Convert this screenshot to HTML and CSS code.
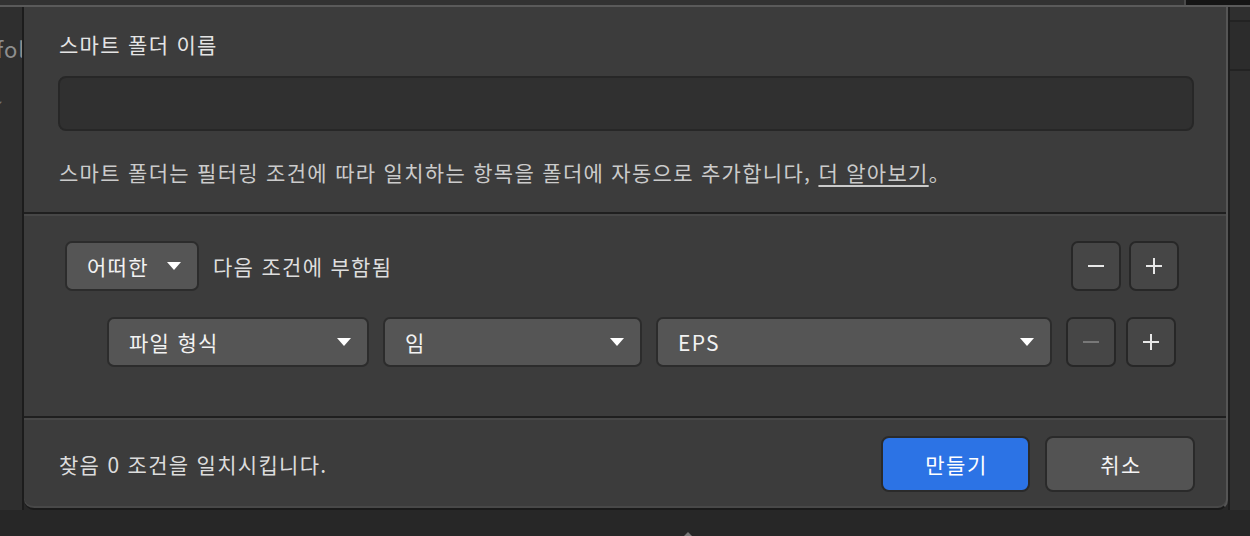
FILE: index.html
```html
<!DOCTYPE html>
<html lang="ko">
<head>
    <meta charset="UTF-8">
    <meta name="viewport" content="width=device-width, initial-scale=1.0">
    <title>스마트 폴더</title>
    <link rel="stylesheet" href="styles.css">
</head>
<body>
    <div class="topbar">
        <div class="topbar-main"></div>
        <div class="topbar-side"></div>
    </div>

    <div class="stage">
        <div class="behind behind-left">
            <span class="behind-label">fol</span>
            <span class="behind-mark">✓</span>
        </div>

        <div class="dialog">
            <section class="name-section">
                <label class="field-label" for="folderName">스마트 폴더 이름</label>
                <input type="text" id="folderName" class="name-input">
                <p class="hint">스마트 폴더는 필터링 조건에 따라 일치하는 항목을 폴더에 자동으로 추가합니다, <a href="#" class="hint-link">더 알아보기</a>。</p>
            </section>

            <div class="divider"></div>

            <section class="rules">
                <div class="rule-row rule-row-top">
                    <button class="select select-any">어떠한 <span class="caret"></span></button>
                    <span class="rule-text">다음 조건에 부함됨</span>
                    <div class="spacer"></div>
                    <button class="step-btn"><span class="minus"></span></button>
                    <button class="step-btn"><span class="plus"></span></button>
                </div>
                <div class="rule-row rule-row-sub">
                    <button class="select select-field">파일 형식 <span class="caret"></span></button>
                    <button class="select select-op">임 <span class="caret"></span></button>
                    <button class="select select-value">EPS <span class="caret"></span></button>
                    <button class="step-btn" disabled><span class="minus"></span></button>
                    <button class="step-btn"><span class="plus"></span></button>
                </div>
            </section>

            <div class="divider"></div>

            <footer class="dialog-footer">
                <span class="match-text">찾음 0 조건을 일치시킵니다.</span>
                <div class="spacer"></div>
                <button class="btn btn-primary">만들기</button>
                <button class="btn">취소</button>
            </footer>
        </div>

        <div class="behind behind-right">
            <div class="side-row"></div>
        </div>
    </div>

    <div class="below">
        <span class="below-tip"></span>
    </div>
</body>
</html>
```

FILE: styles.css
```css
body {
    margin: 0;
    padding: 0;
    height: 536px;
    overflow: hidden;
    background-color: #272727;
    font-family: 'Noto Sans CJK KR', 'Noto Sans', sans-serif;
    font-size: 21px;
    letter-spacing: 1.3px;
    color: #e2e2e2;
}

/* 뒤쪽 창 */
.topbar {
    display: flex;
    height: 5px;
    border-bottom: 2px solid #5a5a5a;
}

.topbar-main {
    flex: 1;
    background-color: #323232;
    border-right: 2px solid #4a4a4a;
}

.topbar-side {
    width: 64px;
    background-color: #151515;
}

.stage {
    display: flex;
}

.behind {
    background-color: #2f2f2f;
    overflow: hidden;
}

.behind-left {
    width: 22px;
    border-right: 2px solid #1c1c1c;
    display: flex;
    flex-direction: column;
}

.behind-label {
    margin: 27px 0 0 -4px;
    font-size: 22px;
    line-height: 28px;
    letter-spacing: 1px;
    color: #8e8e8e;
    white-space: nowrap;
}

.behind-mark {
    margin: 34px 0 0 -8px;
    font-size: 14px;
    color: #777;
}

.behind-right {
    width: 20px;
    border-left: 2px solid #1d1d1d;
}

.side-row {
    margin-top: 13px;
    height: 47px;
    background-color: #2c2c2c;
    border-top: 2px solid #232323;
    border-bottom: 2px solid #232323;
}

/* 대화상자 */
.dialog {
    width: 1204px;
    box-sizing: border-box;
    background-color: #3c3c3c;
    border-right: 2px solid #555;
    border-bottom: 2px solid #1a1a1a;
    border-radius: 0 0 10px 10px;
    box-shadow: inset 0 -2px 0 #484848;
}

.name-section {
    padding: 25px 32px 28px 34px;
}

.field-label {
    display: block;
    padding-left: 1px;
    line-height: 24px;
    color: #e4e4e4;
}

.name-input {
    display: block;
    width: 100%;
    height: 55px;
    box-sizing: border-box;
    margin-top: 20px;
    background-color: #303030;
    border: 2px solid #272727;
    border-radius: 8px;
    color: #eee;
    font-family: inherit;
    font-size: 21px;
    padding: 0 16px;
}

.name-input:focus {
    outline: none;
}

.hint {
    margin: 29px 0 0;
    padding-left: 1px;
    line-height: 24px;
    color: #cbcbcb;
}

.hint-link {
    color: #cbcbcb;
    text-decoration: underline;
    text-underline-offset: 4px;
}

.divider {
    height: 0;
    border-top: 2px solid #1f1f1f;
    border-bottom: 2px solid #474747;
}

/* 조건 */
.rules {
    padding: 25px 0 49px;
    display: flex;
    flex-direction: column;
    gap: 26px;
}

.rule-row {
    display: flex;
    align-items: center;
    height: 50px;
}

.rule-row-top {
    padding: 0 47px 0 41px;
    gap: 8px;
}

.rule-row-sub {
    padding: 0 49px 0 83px;
    gap: 14px;
}

.rule-row-sub .step-btn + .step-btn {
    margin-left: -4px;
}

.spacer {
    flex: 1;
}

.rule-text {
    margin-left: 6px;
    color: #dedede;
}

.select {
    display: flex;
    align-items: center;
    justify-content: space-between;
    height: 50px;
    box-sizing: border-box;
    padding: 0 16px 0 20px;
    background-color: #555;
    border: 2px solid #2c2c2c;
    border-radius: 7px;
    color: #f2f2f2;
    font-family: inherit;
    font-size: 21px;
    letter-spacing: 1.3px;
    cursor: pointer;
}

.select-any {
    width: 134px;
}

.select-field {
    width: 262px;
}

.select-op {
    width: 259px;
}

.select-value {
    width: 396px;
}

.caret {
    width: 0;
    height: 0;
    border-left: 7px solid transparent;
    border-right: 7px solid transparent;
    border-top: 8px solid #fff;
}

.step-btn {
    position: relative;
    width: 50px;
    height: 50px;
    box-sizing: border-box;
    background-color: #464646;
    border: 2px solid #272727;
    border-radius: 7px;
    cursor: pointer;
}

.minus,
.plus {
    position: absolute;
    left: 50%;
    top: 50%;
    width: 16px;
    height: 2px;
    margin: -1px 0 0 -8px;
    background-color: #e8e8e8;
}

.plus::after {
    content: '';
    position: absolute;
    left: 7px;
    top: -7px;
    width: 2px;
    height: 16px;
    background-color: #e8e8e8;
}

.step-btn:disabled .minus {
    background-color: #787878;
}

/* 하단 */
.dialog-footer {
    display: flex;
    align-items: center;
    gap: 15px;
    padding: 16px 31px 16px 35px;
}

.match-text {
    color: #dcdcdc;
}

.btn {
    width: 150px;
    height: 56px;
    box-sizing: border-box;
    padding: 0 0 0 2px;
    background-color: #535353;
    border: 2px solid #2a2a2a;
    border-radius: 8px;
    color: #f4f4f4;
    font-family: inherit;
    font-size: 21px;
    letter-spacing: 1.5px;
    cursor: pointer;
}

.btn-primary {
    width: 149px;
    background-color: #2c73e5;
    border-color: #2a2a2a;
    color: #fff;
}

.below {
    height: 26px;
    position: relative;
}

.below-tip {
    position: absolute;
    left: 684px;
    bottom: 0;
    border-left: 4px solid transparent;
    border-right: 4px solid transparent;
    border-bottom: 4px solid #777;
}
```
